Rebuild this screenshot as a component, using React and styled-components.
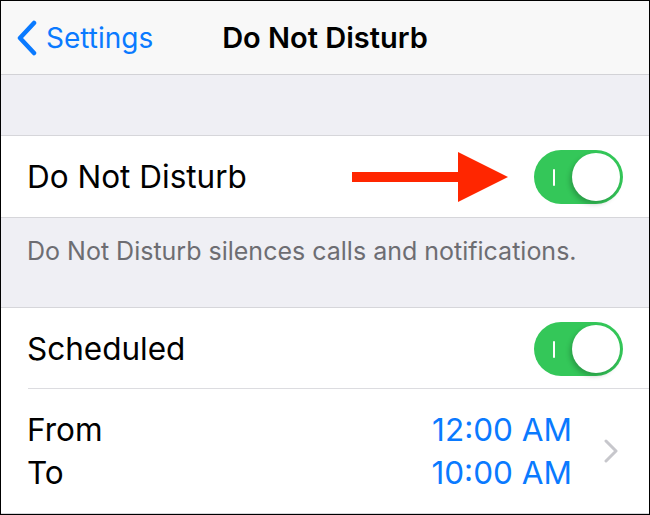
import React from 'react'
import styled, { createGlobalStyle } from 'styled-components'

const Global = createGlobalStyle`
    html, body {
        margin: 0;
        padding: 0;
        background: #fff;
    }
    * {
        box-sizing: border-box;
    }
`;

const Screen = styled.div`
    width: 650px;
    height: 515px;
    border: 1px solid #000;
    background: #efeff4;
    font-family: Inter, 'Liberation Sans', sans-serif;
    overflow: hidden;
    display: flex;
    flex-direction: column;
`;

const NavBar = styled.div`
    height: 74px;
    flex: none;
    background: #f8f8f8;
    border-bottom: 1px solid #d2d2d6;
    display: grid;
    grid-template-columns: 1fr auto 1fr;
    align-items: center;
`;

const BackButton = styled.div`
    display: flex;
    align-items: center;
    gap: 8px;
    padding-left: 15px;
    color: #0a7aff;
    font-size: 28px;
`;

const NavTitle = styled.div`
    font-size: 29px;
    font-weight: 600;
    color: #000;
`;

const Spacer = styled.div`
    height: ${p => p.$h}px;
    flex: none;
`;

const Group = styled.div`
    background: #fff;
    border-top: 1px solid #d6d6da;
    border-bottom: 1px solid #d6d6da;
    flex: none;
`;

const Row = styled.div`
    position: relative;
    height: ${p => p.$h || 81}px;
    padding: 0 26px 0 26px;
    display: flex;
    align-items: center;
    justify-content: space-between;
    &::after {
        content: '';
        display: ${p => p.$divider ? 'block' : 'none'};
        position: absolute;
        left: 27px;
        right: 0;
        bottom: 0;
        height: 1px;
        background: #dcdce0;
    }
`;

const Label = styled.span`
    font-size: 31.5px;
    color: #000;
`;

const Footer = styled.div`
    height: 89px;
    flex: none;
    padding: 18px 26px 0;
    font-size: 25px;
    color: #6d6d72;
`;

const Track = styled.div`
    width: 89px;
    height: 54px;
    border-radius: 27px;
    background: #34c759;
    position: relative;
    flex: none;
    &::before {
        content: '';
        position: absolute;
        left: 19px;
        top: 19px;
        width: 2px;
        height: 17px;
        background: #fff;
        border-radius: 1px;
    }
`;

const Knob = styled.div`
    position: absolute;
    right: 3px;
    top: 3px;
    width: 48px;
    height: 48px;
    border-radius: 50%;
    background: #fff;
    box-shadow: -2px 3px 5px rgba(0, 0, 0, 0.22);
`;

const Arrow = styled.svg`
    position: absolute;
    left: 351px;
    top: 15px;
`;

const TimeRow = styled.div`
    height: 124px;
    padding: 0 31px 0 26px;
    display: flex;
    align-items: center;
`;

const Column = styled.div`
    display: flex;
    flex-direction: column;
    align-items: ${p => p.$end ? 'flex-end' : 'flex-start'};
    flex: ${p => p.$grow ? 1 : 'none'};
    font-size: 31.5px;
    line-height: 43px;
    color: ${p => p.$blue ? '#0a7aff' : '#000'};
`;

const Chevron = styled.svg`
    margin-left: 32px;
    flex: none;
`;

const Toggle = () => (
    <Track>
        <Knob />
    </Track>
)

const App = () => {
    return (
        <>
            <Global />
            <Screen>
                <NavBar>
                    <BackButton>
                        <svg width="22" height="36" viewBox="0 0 22 36">
                            <path d="M18 3 L4 18 L18 33" fill="none" stroke="#0a7aff" strokeWidth="4.5" strokeLinecap="round" strokeLinejoin="round" />
                        </svg>
                        Settings
                    </BackButton>
                    <NavTitle>Do Not Disturb</NavTitle>
                    <div />
                </NavBar>

                <Spacer $h={60} />

                <Group>
                    <Row>
                        <Label>Do Not Disturb</Label>
                        <Arrow width="156" height="52" viewBox="0 0 156 52">
                            <rect x="0" y="21" width="108" height="10" fill="#ff2600" />
                            <polygon points="106,1 156,26 106,51" fill="#ff2600" />
                        </Arrow>
                        <Toggle />
                    </Row>
                </Group>

                <Footer>Do Not Disturb silences calls and notifications.</Footer>

                <Group>
                    <Row $divider>
                        <Label>Scheduled</Label>
                        <Toggle />
                    </Row>
                    <TimeRow>
                        <Column $grow>
                            <span>From</span>
                            <span>To</span>
                        </Column>
                        <Column $end $blue>
                            <span>12:00 AM</span>
                            <span>10:00 AM</span>
                        </Column>
                        <Chevron width="14" height="24" viewBox="0 0 14 24">
                            <path d="M2 2 L12 12 L2 22" fill="none" stroke="#c7c7cc" strokeWidth="3" strokeLinecap="round" strokeLinejoin="round" />
                        </Chevron>
                    </TimeRow>
                </Group>
            </Screen>
        </>
    )
}

export default App
